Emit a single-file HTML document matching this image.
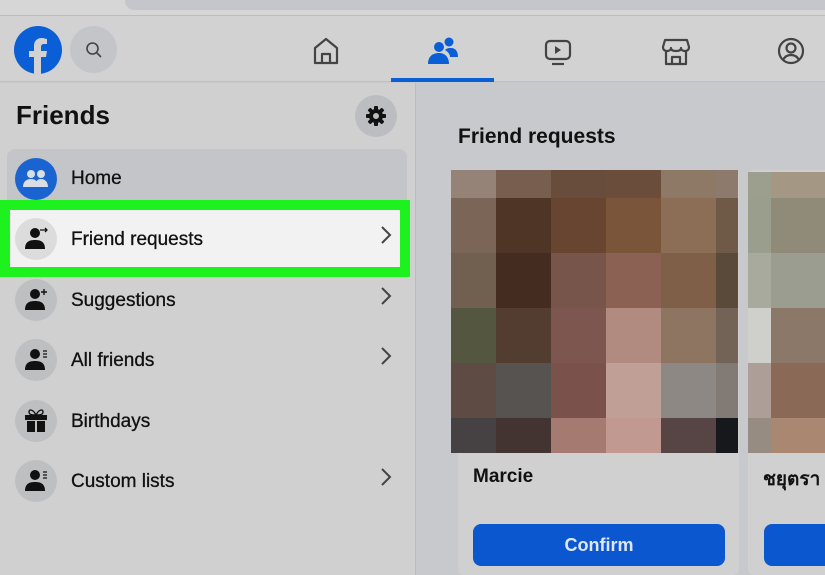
<!DOCTYPE html>
<html><head><meta charset="utf-8"><style>
*{margin:0;padding:0;box-sizing:border-box}
body{width:825px;height:575px;overflow:hidden;background:#c8c9cc;font-family:"Liberation Sans","Noto Sans CJK SC",sans-serif;position:relative}
.a{position:absolute}
.top{left:0;top:0;width:825px;height:16px;background:#d6d6d6;border-bottom:1px solid #bdbdbd}
.url{left:125px;top:-8px;width:720px;height:18px;background:#c4c6cb;border-radius:9px}
.hdr{left:0;top:16px;width:825px;height:66px;background:#d2d2d2;border-bottom:1px solid #bfbfbf}
.side{left:0;top:83px;width:416px;height:492px;background:#d0d0d0;border-right:1px solid #bcbcbc}
.row{left:7px;width:400px;height:60px}
.ic{position:absolute;left:8px;top:9px;width:42px;height:42px;border-radius:50%;background:#bebfc1}
.lbl{position:absolute;left:64px;top:19px;font-size:19px;color:#111;-webkit-text-stroke:0.3px #111}
.t{-webkit-text-stroke:0.3px #111}
</style></head><body>
<div class="a top"></div><div class="a url"></div>
<div class="a hdr">
 <svg class="a" style="left:14px;top:10px" width="48" height="48" viewBox="0 0 48 48"><circle cx="24" cy="24" r="24" fill="#0b5fd6"/><path d="M27 48V31h5l1-6h-6v-4c0-2 1-3 3-3h3v-5c-1 0-3-1-5-1-5 0-8 3-8 8v5h-5v6h5v17z" fill="#d2d2d2"/></svg>
 <div class="a" style="left:70px;top:10px;width:47px;height:47px;border-radius:50%;background:#c4c5c8"></div>
 <svg class="a" style="left:84px;top:24px" width="20" height="20" viewBox="0 0 20 20"><circle cx="8.5" cy="8.5" r="5.5" fill="none" stroke="#444" stroke-width="1.6"/><path d="M12.5 12.5l4.5 4.5" stroke="#444" stroke-width="1.6"/></svg>
 <svg class="a" style="left:312px;top:20px" width="28" height="30" viewBox="0 0 28 30"><path d="M3 27V12L14 3l11 9v15zM10 27v-9h8v9" fill="none" stroke="#444" stroke-width="2.2" stroke-linejoin="round"/></svg>
 <svg class="a" style="left:427px;top:20px" width="32" height="30" viewBox="0 0 32 30"><circle cx="12" cy="11" r="5" fill="#0b5fd6"/><circle cx="22" cy="6" r="4.5" fill="#0b5fd6"/><path d="M1 28c0-8 5-11 11-11s10 4 10 11z" fill="#0b5fd6"/><path d="M18 14c2-2 4-2 6-2 5 0 7 4 7 9h-8c0-3-2-5-5-7z" fill="#0b5fd6"/></svg>
 <div class="a" style="left:391px;top:62px;width:103px;height:4px;background:#0b5fd6"></div>
 <svg class="a" style="left:543px;top:22px" width="30" height="30" viewBox="0 0 30 30"><rect x="3" y="3" width="24" height="18" rx="4" fill="none" stroke="#444" stroke-width="2.2"/><path d="M12 8v8l6-4z" fill="#444"/><path d="M9 26h12" stroke="#444" stroke-width="2.2"/></svg>
 <svg class="a" style="left:660px;top:20px" width="32" height="32" viewBox="0 0 32 32"><path d="M5 4h22l2 7c0 3-2 4-4 4s-4-1-4-3c0 2-2 3-5 3s-5-1-5-3c0 2-2 3-4 3s-4-1-4-4zM6 15v13h20V15M12 28v-7h8v7" fill="none" stroke="#444" stroke-width="2.2" stroke-linejoin="round"/></svg>
 <svg class="a" style="left:776px;top:20px" width="30" height="30" viewBox="0 0 30 30"><circle cx="15" cy="15" r="12" fill="none" stroke="#444" stroke-width="2.2"/><circle cx="15" cy="12" r="4.5" fill="none" stroke="#444" stroke-width="2.2"/><path d="M7 24c2-4 5-5 8-5s6 1 8 5" fill="none" stroke="#444" stroke-width="2.2"/></svg>
</div>
<div class="a side">
 <div class="a" style="left:16px;top:17px;font-size:26px;font-weight:bold;color:#111">Friends</div>
 <div class="a" style="left:355px;top:12px;width:42px;height:42px;border-radius:50%;background:#bcbdc0"></div>
 <svg class="a" style="left:365px;top:22px" width="22" height="22" viewBox="0 0 22 22"><g fill="#111"><circle cx="11" cy="11" r="7"/><rect x="9" y="1" width="4" height="20" rx="1"/><rect x="9" y="1" width="4" height="20" rx="1" transform="rotate(45 11 11)"/><rect x="9" y="1" width="4" height="20" rx="1" transform="rotate(90 11 11)"/><rect x="9" y="1" width="4" height="20" rx="1" transform="rotate(135 11 11)"/></g><circle cx="11" cy="11" r="3" fill="#bcbdc0"/></svg>
</div>
<div class="a row" style="top:149px;height:52px;background:#c4c5c8;border-radius:8px 8px 0 0"><div class="ic" style="background:#1a64d2;top:9px"><svg width="42" height="42" viewBox="0 0 42 42"><g fill="#d8dde6"><circle cx="16" cy="16" r="4"/><circle cx="26" cy="16" r="4"/><path d="M8 29c0-5 3-8 8-8s7 3 7 8zM20 29c0-5 2-8 6-8s7 3 7 8z"/></g></svg></div><div class="lbl" style="top:19px">Home</div></div>
<div class="a" style="left:0;top:200px;width:410px;height:77px;background:#1ef21e"></div>
<div class="a row" style="left:10px;top:210px;width:390px;height:57px;background:#f2f2f2"><div class="ic" style="left:5px;top:8px;background:#dcdcdc"></div><div class="lbl" style="left:61px;top:19px">Friend requests</div></div>
<div class="a" style="left:15px;top:279px;width:42px;height:42px;border-radius:50%;background:#bebfc1"></div>
<div class="a" style="left:15px;top:339px;width:42px;height:42px;border-radius:50%;background:#bebfc1"></div>
<div class="a" style="left:15px;top:400px;width:42px;height:42px;border-radius:50%;background:#bebfc1"></div>
<div class="a" style="left:15px;top:460px;width:42px;height:42px;border-radius:50%;background:#bebfc1"></div>
<div class="a t" style="left:71px;top:290px;font-size:19px;color:#111">Suggestions</div>
<div class="a t" style="left:71px;top:350px;font-size:19px;color:#111">All friends</div>
<div class="a t" style="left:71px;top:411px;font-size:19px;color:#111">Birthdays</div>
<div class="a t" style="left:71px;top:471px;font-size:19px;color:#111">Custom lists</div>
<svg class="a" style="left:0;top:0" width="416" height="575" viewBox="0 0 416 575">
 <g fill="#111">
  <circle cx="35" cy="233" r="5"/><path d="M25 249c0-7 4-9 10-9s10 2 10 9z"/><path d="M40 230h7m-2-2l2 2-2 2" stroke="#111" stroke-width="1.3" fill="none"/>
  <circle cx="35" cy="294" r="5"/><path d="M25 310c0-7 4-9 10-9s10 2 10 9z"/><path d="M44 289v6m-3-3h6" stroke="#111" stroke-width="1.4"/>
  <circle cx="35" cy="354" r="5"/><path d="M25 370c0-7 4-9 10-9s10 2 10 9z"/><path d="M43 351h4m-4 3h4m-4 3h4" stroke="#111" stroke-width="1.2"/>
  <circle cx="35" cy="475" r="5"/><path d="M25 491c0-7 4-9 10-9s10 2 10 9z"/><path d="M43 472h4m-4 3h4m-4 3h4" stroke="#111" stroke-width="1.2"/>
  <rect x="25" y="415" width="22" height="5"/><rect x="27" y="421" width="8" height="11"/><rect x="37" y="421" width="8" height="11"/><path d="M36 415c-3-6-7-6-7-3s4 3 7 3c3 0 7 0 7-3s-4-3-7 3" fill="none" stroke="#111" stroke-width="1.4"/>
 </g>
 <g fill="none" stroke="#444" stroke-width="2"><path d="M382 227l8 8-8 8"/><path d="M382 288l8 8-8 8"/><path d="M382 348l8 8-8 8"/><path d="M382 469l8 8-8 8"/></g>
</svg>
<div class="a" style="left:458px;top:125px;font-size:21px;font-weight:bold;color:#111">Friend requests</div>
<div class="a" style="left:458px;top:170px;width:281px;height:405px;background:#d0d0d0;border-radius:6px"></div>
<div class="a" style="left:748px;top:170px;width:90px;height:405px;background:#d0d0d0;border-radius:6px"></div>
<svg class="a" style="left:451px;top:170px" width="287" height="283" shape-rendering="crispEdges">
<g>
<rect x="0" y="0" width="45" height="28" fill="#958377"/><rect x="45" y="0" width="55" height="28" fill="#775e4e"/><rect x="100" y="0" width="55" height="28" fill="#694d3c"/><rect x="155" y="0" width="55" height="28" fill="#6a4d3a"/><rect x="210" y="0" width="55" height="28" fill="#8e7966"/><rect x="265" y="0" width="22" height="28" fill="#8d7a6c"/>
<rect x="0" y="28" width="45" height="55" fill="#7a6556"/><rect x="45" y="28" width="55" height="55" fill="#4e3525"/><rect x="100" y="28" width="55" height="55" fill="#684531"/><rect x="155" y="28" width="55" height="55" fill="#7a553a"/><rect x="210" y="28" width="55" height="55" fill="#8c6d55"/><rect x="265" y="28" width="22" height="55" fill="#6f5a48"/>
<rect x="0" y="83" width="45" height="55" fill="#716050"/><rect x="45" y="83" width="55" height="55" fill="#442d20"/><rect x="100" y="83" width="55" height="55" fill="#77554b"/><rect x="155" y="83" width="55" height="55" fill="#8a6152"/><rect x="210" y="83" width="55" height="55" fill="#7f5f48"/><rect x="265" y="83" width="22" height="55" fill="#5a4a3a"/>
<rect x="0" y="138" width="45" height="55" fill="#545640"/><rect x="45" y="138" width="55" height="55" fill="#533c30"/><rect x="100" y="138" width="55" height="55" fill="#7e5650"/><rect x="155" y="138" width="55" height="55" fill="#b18a80"/><rect x="210" y="138" width="55" height="55" fill="#8e7562"/><rect x="265" y="138" width="22" height="55" fill="#726356"/>
<rect x="0" y="193" width="45" height="55" fill="#5e4b43"/><rect x="45" y="193" width="55" height="55" fill="#575350"/><rect x="100" y="193" width="55" height="55" fill="#7a524b"/><rect x="155" y="193" width="55" height="55" fill="#c09f97"/><rect x="210" y="193" width="55" height="55" fill="#8d8883"/><rect x="265" y="193" width="22" height="55" fill="#827a74"/>
<rect x="0" y="248" width="45" height="35" fill="#464143"/><rect x="45" y="248" width="55" height="35" fill="#433432"/><rect x="100" y="248" width="55" height="35" fill="#a57a71"/><rect x="155" y="248" width="55" height="35" fill="#c29990"/><rect x="210" y="248" width="55" height="35" fill="#574444"/><rect x="265" y="248" width="22" height="35" fill="#16181c"/>
</g></svg>
<svg class="a" style="left:748px;top:172px" width="77" height="281" shape-rendering="crispEdges">
<rect x="0" y="0" width="23" height="26" fill="#9c9f8e"/><rect x="23" y="0" width="54" height="26" fill="#a49885"/>
<rect x="0" y="26" width="23" height="55" fill="#9a9e8d"/><rect x="23" y="26" width="54" height="55" fill="#908b78"/>
<rect x="0" y="81" width="23" height="55" fill="#a8aa9e"/><rect x="23" y="81" width="54" height="55" fill="#9b9d90"/>
<rect x="0" y="136" width="23" height="55" fill="#cfd0cb"/><rect x="23" y="136" width="54" height="55" fill="#8c7868"/>
<rect x="0" y="191" width="23" height="55" fill="#ae9e98"/><rect x="23" y="191" width="54" height="55" fill="#8a6a57"/>
<rect x="0" y="246" width="23" height="35" fill="#978c82"/><rect x="23" y="246" width="54" height="35" fill="#a98770"/>
</svg>
<div class="a" style="left:473px;top:466px;font-size:19px;font-weight:bold;color:#111">Marcie</div>
<div class="a" style="left:763px;top:464px;font-size:19px;font-weight:bold;color:#111">ชยุตรา</div>
<div class="a" style="left:473px;top:524px;width:252px;height:42px;background:#0b57d0;border-radius:8px;color:#dfe7f5;font-size:18px;font-weight:bold;text-align:center;line-height:42px">Confirm</div>
<div class="a" style="left:764px;top:524px;width:80px;height:42px;background:#0b57d0;border-radius:8px"></div>
</body></html>
